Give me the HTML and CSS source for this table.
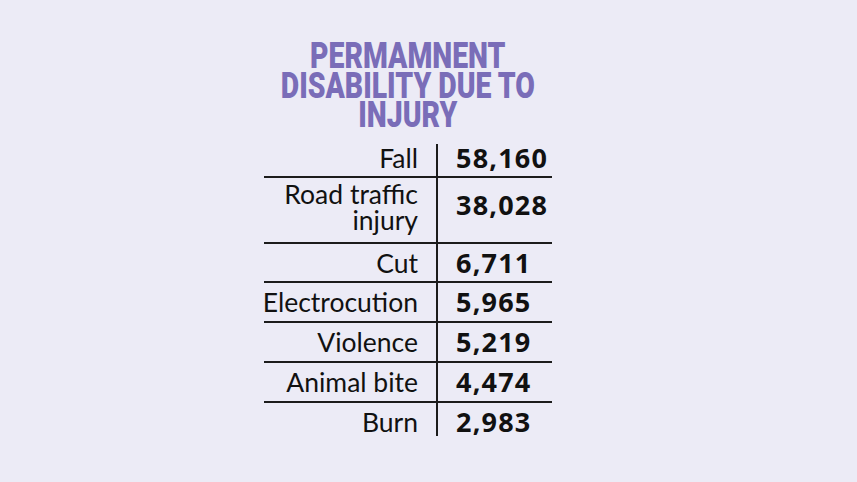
FILE: index.html
```html
<!DOCTYPE html>
<html>
<head>
<meta charset="utf-8">
<link rel="stylesheet" href="styles.css">
</head>
<body>
<div class="wrap">
  <h1 class="title"><span>PERMAMNENT</span><span>DISABILITY DUE TO</span><span>INJURY</span></h1>
  <div class="table">
    <div class="row r1"><div class="label">Fall</div><div class="num">58,160</div></div>
    <div class="row r2"><div class="label">Road traffic<br>injury</div><div class="num">38,028</div></div>
    <div class="row r3"><div class="label">Cut</div><div class="num">6,711</div></div>
    <div class="row"><div class="label">Electrocution</div><div class="num">5,965</div></div>
    <div class="row"><div class="label">Violence</div><div class="num">5,219</div></div>
    <div class="row"><div class="label">Animal bite</div><div class="num">4,474</div></div>
    <div class="row last"><div class="label">Burn</div><div class="num">2,983</div></div>
  </div>
</div>
</body>
</html>
```
FILE: styles.css
```css
* { box-sizing: border-box; }
html, body {
  margin: 0;
  padding: 0;
  background: #ecebf6;
}
body {
  width: 857px;
  height: 482px;
  overflow: hidden;
}
.wrap {
  width: 288px;
  margin-left: 264px;
  padding-top: 41px;
  display: flex;
  flex-direction: column;
  align-items: center;
}
.title {
  margin: 0;
  height: 88.5px;
  font-family: Roboto, sans-serif;
  font-weight: 900;
  font-size: 37.5px;
  line-height: 29.5px;
  color: #7a6db8;
  text-align: center;
  display: flex;
  flex-direction: column;
  align-items: center;
  transform: scaleX(0.757);
  white-space: nowrap;
}
.table {
  margin-top: 14.5px;
  width: 288px;
  display: flex;
  flex-direction: column;
}
.row {
  display: grid;
  grid-template-columns: 174px 1fr;
  height: 40px;
  border-bottom: 2px solid #1c1c1c;
}
.row.r1 { height: 34px; }
.row.r2 { height: 66px; }
.row.r3 { height: 39px; }
.row.last { border-bottom: none; height: 31px; }
.label {
  border-right: 2px solid #1c1c1c;
  padding-right: 18px;
  font-family: Lato, "Open Sans", sans-serif;
  font-size: 26.5px;
  line-height: 28px;
  color: #111;
  display: flex;
  flex-direction: column;
  justify-content: center;
  align-items: flex-end;
  text-align: right;
}
.num {
  padding-left: 18px;
  font-family: "Open Sans", sans-serif;
  font-weight: 700;
  font-size: 27px;
  letter-spacing: 1.2px;
  line-height: 28px;
  color: #111;
  display: flex;
  flex-direction: column;
  justify-content: center;
  align-items: flex-start;
}
.r1 .label, .r1 .num {
  justify-content: flex-end;
  padding-bottom: 7px;
}
.r2 .label {
  justify-content: flex-start;
  padding-top: 3px;
  line-height: 26px;
}
.r2 .num {
  justify-content: flex-start;
  padding-top: 13px;
}
.last .label, .last .num {
  justify-content: flex-start;
  padding-top: 5px;
}
```
